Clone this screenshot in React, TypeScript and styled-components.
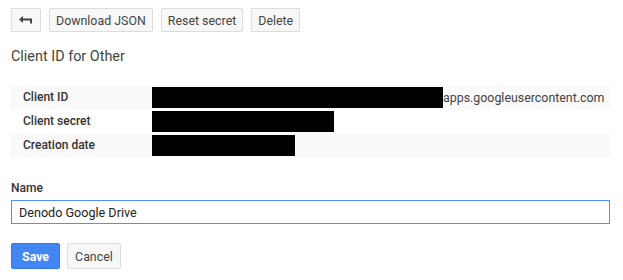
import styled, { createGlobalStyle } from 'styled-components';

const GlobalStyle = createGlobalStyle`
  body {
    margin: 0;
    background: #fff;
    font-family: Roboto, Arial, sans-serif;
  }
`;

const Page = styled.div`
  padding: 8px 13px 0 11px;
`;

const Toolbar = styled.div`
  display: flex;
  gap: 8px;
`;

const Button = styled.button<{ $primary?: boolean }>`
  height: 24px;
  padding: 0 6px;
  border-radius: 2px;
  font-family: Roboto, Arial, sans-serif;
  font-size: 12.4px;
  font-weight: ${(p) => (p.$primary ? 700 : 400)};
  color: ${(p) => (p.$primary ? '#fff' : '#444')};
  background: ${(p) => (p.$primary ? '#4285f4' : '#f7f7f7')};
  border: 1px solid ${(p) => (p.$primary ? '#3a78e0' : '#dcdcdc')};
  display: flex;
  align-items: center;
  justify-content: center;
`;

const BackButton = styled(Button)`
  width: 30px;
  padding: 0;
`;

const Title = styled.h2`
  margin: 16px 0 0;
  font-size: 14.4px;
  font-weight: 400;
  color: #444;
  line-height: 18px;
`;

const Table = styled.div`
  margin-top: 19px;
  display: flex;
  flex-direction: column;
`;

const Row = styled.div<{ $shaded?: boolean }>`
  display: flex;
  align-items: center;
  height: 24px;
  background: ${(p) => (p.$shaded ? '#f9f9f9' : '#fff')};
`;

const Label = styled.div`
  flex-shrink: 0;
  width: 129px;
  padding-left: 12px;
  font-size: 12px;
  font-weight: 500;
  color: #333;
`;

const Value = styled.div`
  display: flex;
  align-items: center;
  font-size: 12.4px;
  color: #444;
  white-space: nowrap;
`;

const Redacted = styled.div<{ $w: number }>`
  width: ${(p) => p.$w}px;
  height: 21px;
  background: #000;
`;

const Field = styled.div`
  margin-top: 24px;
  display: flex;
  flex-direction: column;
`;

const FieldLabel = styled.label`
  font-size: 12px;
  font-weight: 500;
  color: #333;
  line-height: 14px;
`;

const Input = styled.input`
  margin-top: 5px;
  height: 24px;
  box-sizing: border-box;
  border: 1px solid #4d90fe;
  padding: 0 7px;
  font-family: Roboto, Arial, sans-serif;
  font-size: 12.6px;
  color: #222;
  outline: none;
`;

const Actions = styled.div`
  margin-top: 19px;
  display: flex;
  gap: 7px;
`;

const ActionButton = styled(Button)`
  height: 26px;
  padding: 0 ${(p) => (p.$primary ? '10px' : '7px')};
`;

function BackIcon() {
  return (
    <svg width="14" height="8" viewBox="0 0 14 8">
      <path d="M0 3.5 L4 0 V2.5 H13 V7.5 H11 V4.5 H4 V7 Z" fill="#444" />
    </svg>
  );
}

export default function App() {
  return (
    <>
      <GlobalStyle />
      <Page>
        <Toolbar>
          <BackButton>
            <BackIcon />
          </BackButton>
          <Button>Download JSON</Button>
          <Button>Reset secret</Button>
          <Button>Delete</Button>
        </Toolbar>

        <Title>Client ID for Other</Title>

        <Table>
          <Row $shaded>
            <Label>Client ID</Label>
            <Value>
              <Redacted $w={291} />
              apps.googleusercontent.com
            </Value>
          </Row>
          <Row>
            <Label>Client secret</Label>
            <Value>
              <Redacted $w={182} />
            </Value>
          </Row>
          <Row $shaded>
            <Label>Creation date</Label>
            <Value>
              <Redacted $w={143} />
            </Value>
          </Row>
        </Table>

        <Field>
          <FieldLabel>Name</FieldLabel>
          <Input defaultValue="Denodo Google Drive" />
        </Field>

        <Actions>
          <ActionButton $primary>Save</ActionButton>
          <ActionButton>Cancel</ActionButton>
        </Actions>
      </Page>
    </>
  );
}
